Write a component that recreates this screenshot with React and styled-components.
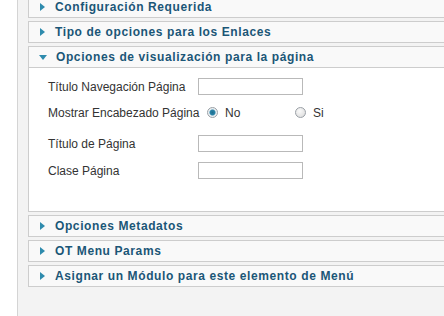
import React from 'react';
import styled, { createGlobalStyle } from 'styled-components';

const GlobalStyle = createGlobalStyle`
  html, body {
    margin: 0;
    padding: 0;
    background: #fff;
    overflow: hidden;
  }
  body {
    font-family: "Liberation Sans", Arial, sans-serif;
  }
`;

const Page = styled.div`
  display: flex;
  height: 316px;
  overflow: hidden;
`;

const LeftStrip = styled.div`
  width: 17px;
  flex-shrink: 0;
  background: #fff;
  border-right: 1px solid #d4d4d4;
`;

const Main = styled.div`
  flex: 1;
  background: #f3f3f3;
  padding-left: 10px;
  overflow: hidden;
`;

const PaneList = styled.div`
  margin-top: -4px;
  width: 470px;
`;

const Pane = styled.div`
  border: 1px solid #cdcdcd;
  background: #fff;
  margin-bottom: 3px;
`;

const Toggler = styled.h3`
  display: flex;
  align-items: center;
  margin: 0;
  height: 20px;
  background: #f9f9f9;
  border-bottom: ${p => (p.$open ? '1px solid #cdcdcd' : 'none')};
  padding-left: 11px;
  font-size: 12px;
  font-weight: bold;
  letter-spacing: 0.6px;
  color: #1b5677;
  white-space: nowrap;
`;

const Arrow = styled.span`
  display: inline-block;
  width: 0;
  height: 0;
  margin-right: ${p => (p.$open ? '9px' : '10px')};
  ${p =>
    p.$open
      ? `
    border-left: 4px solid transparent;
    border-right: 4px solid transparent;
    border-top: 5px solid #2e8bad;
    margin-left: -1px;
  `
      : `
    border-top: 4px solid transparent;
    border-bottom: 4px solid transparent;
    border-left: 5px solid #2e8bad;
  `}
`;

const Content = styled.div`
  height: 143px;
  padding: 10px 0 0 19px;
  box-sizing: border-box;
  background: #fff;
`;

const Row = styled.div`
  display: flex;
  align-items: center;
  height: 17px;
  margin-bottom: ${p => p.$gap}px;
  font-size: 12px;
  color: #333;
`;

const Label = styled.label`
  width: 150px;
  flex-shrink: 0;
  white-space: nowrap;
`;

const TextInput = styled.input`
  width: 105px;
  height: 17px;
  box-sizing: border-box;
  border: 1px solid #b9b9b9;
  background: #fff;
  margin: 0;
  padding: 0 2px;
  font-size: 11px;
`;

const RadioOption = styled.span`
  display: inline-flex;
  align-items: center;
  width: ${p => p.$w}px;
  margin-left: ${p => p.$ml || 0}px;
`;

const RadioDot = styled.span`
  display: inline-block;
  width: 11px;
  height: 11px;
  border-radius: 50%;
  box-sizing: border-box;
  border: 1px solid #9aa0a6;
  background: ${p =>
    p.$checked
      ? 'radial-gradient(circle, #1d6d8f 0, #2b84a8 2.5px, #e8eef2 3.5px, #f6f6f6 100%)'
      : 'radial-gradient(circle at 40% 35%, #fafafa 0, #d8d8d8 100%)'};
  margin-right: 7px;
`;

const panes = [
  'Configuración Requerida',
  'Tipo de opciones para los Enlaces',
];

const panesAfter = [
  'Opciones Metadatos',
  'OT Menu Params',
  'Asignar un Módulo para este elemento de Menú',
];

const ClosedPane = ({ title }) => (
  <Pane>
    <Toggler>
      <Arrow />
      {title}
    </Toggler>
  </Pane>
);

export default function App() {
  return (
    <>
      <GlobalStyle />
      <Page>
        <LeftStrip />
        <Main>
          <PaneList>
            {panes.map(t => (
              <ClosedPane key={t} title={t} />
            ))}
            <Pane>
              <Toggler $open>
                <Arrow $open />
                Opciones de visualización para la página
              </Toggler>
              <Content>
                <Row $gap={9}>
                  <Label>Título Navegación Página</Label>
                  <TextInput type="text" />
                </Row>
                <Row $gap={14}>
                  <Label>Mostrar Encabezado Página</Label>
                  <RadioOption $w={88} $ml={9}>
                    <RadioDot $checked />
                    No
                  </RadioOption>
                  <RadioOption $w={40}>
                    <RadioDot />
                    Si
                  </RadioOption>
                </Row>
                <Row $gap={10}>
                  <Label>Título de Página</Label>
                  <TextInput type="text" />
                </Row>
                <Row $gap={0}>
                  <Label>Clase Página</Label>
                  <TextInput type="text" />
                </Row>
              </Content>
            </Pane>
            {panesAfter.map(t => (
              <ClosedPane key={t} title={t} />
            ))}
          </PaneList>
        </Main>
      </Page>
    </>
  );
}
